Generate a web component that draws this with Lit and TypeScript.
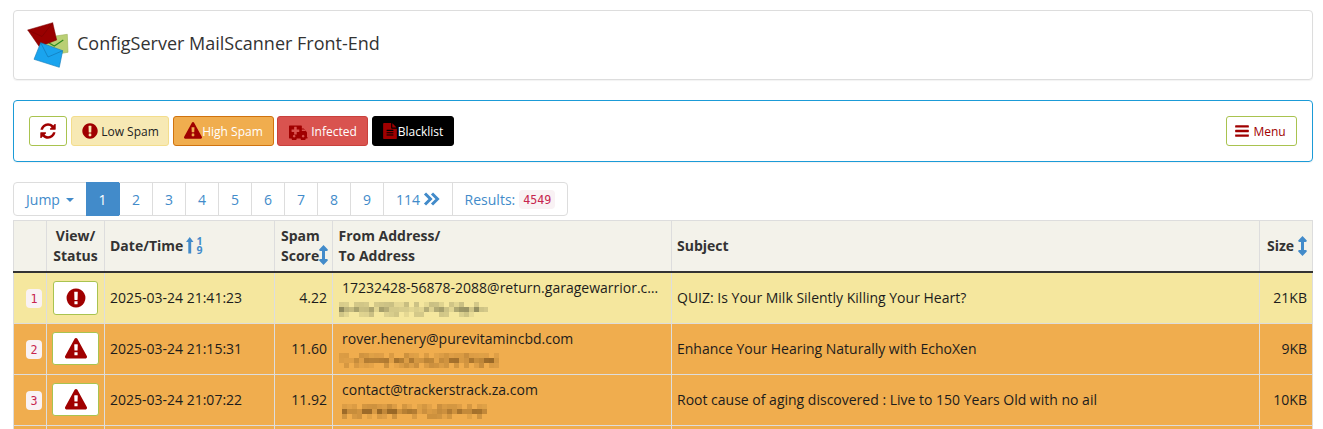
import { LitElement, html, css, svg } from "lit";
import { customElement } from "lit/decorators.js";

const P = {
  circle: "M896 128q209 0 385.5 103t279.5 279.5 103 385.5-103 385.5-279.5 279.5-385.5 103-385.5-103-279.5-279.5-103-385.5 103-385.5 279.5-279.5 385.5-103zm128 1247v-190q0-14-9-23.5t-22-9.5h-192q-13 0-23 10t-10 23v190q0 13 10 23t23 10h192q13 0 22-9.5t9-23.5zm-2-344l18-621q0-12-10-18-10-8-24-8h-220q-14 0-24 8-10 6-10 18l17 621q0 10 10 17.5t24 7.5h185q14 0 23.5-7.5t10.5-17.5z",
  warn: "M1024 1375v-190q0-14-9.5-23.5t-22.5-9.5h-192q-13 0-22.5 9.5t-9.5 23.5v190q0 14 9.5 23.5t22.5 9.5h192q13 0 22.5-9.5t9.5-23.5zm-2-374l18-459q0-12-10-19-13-11-24-11h-220q-11 0-24 11-10 7-10 21l17 457q0 10 10 16.5t24 6.5h185q14 0 23.5-6.5t10.5-16.5zm-14-934l768 1408q35 63-2 126-17 29-46.5 46t-63.5 17h-1536q-34 0-63.5-17t-46.5-46q-37-63-2-126l768-1408q17-31 47-49t65-18 65 18 47 49z",
  refresh: "M1639 1056q0 5-1 7-64 268-268 434.5t-478 166.5q-146 0-282.5-55t-243.5-157l-129 129q-19 19-45 19t-45-19-19-45v-448q0-26 19-45t45-19h448q26 0 45 19t19 45-19 45l-137 137q71 66 161 102t187 36q134 0 250-65t186-179q11-17 53-117 8-23 30-23h192q13 0 22.5 9.5t9.5 22.5zm25-800v448q0 26-19 45t-45 19h-448q-26 0-45-19t-19-45 19-45l138-138q-148-137-349-137-134 0-250 65t-186 179q-11 17-53 117-8 23-30 23h-199q-13 0-22.5-9.5t-9.5-22.5v-7q65-268 270-434.5t480-166.5q146 0 284 55.5t245 156.5l130-129q19-19 45-19t45 19 19 45z",
  bars: "M1664 1344v128q0 26-19 45t-45 19h-1408q-26 0-45-19t-19-45v-128q0-26 19-45t45-19h1408q26 0 45 19t19 45zm0-512v128q0 26-19 45t-45 19h-1408q-26 0-45-19t-19-45v-128q0-26 19-45t45-19h1408q26 0 45 19t19 45zm0-512v128q0 26-19 45t-45 19h-1408q-26 0-45-19t-19-45v-128q0-26 19-45t45-19h1408q26 0 45 19t19 45z",
  amb: "M576 1408q0-53-37.5-90.5t-90.5-37.5-90.5 37.5-37.5 90.5 37.5 90.5 90.5 37.5 90.5-37.5 37.5-90.5zm-384-512h384v-256h-158q-14 2-22 9l-195 195q-7 12-9 22v30zm1280 512q0-53-37.5-90.5t-90.5-37.5-90.5 37.5-37.5 90.5 37.5 90.5 90.5 37.5 90.5-37.5 37.5-90.5zm128-448v-192q0-14-9-23t-23-9h-224v-224q0-14-9-23t-23-9h-192q-14 0-23 9t-9 23v224h-224q-14 0-23 9t-9 23v192q0 14 9 23t23 9h224v224q0 14 9 23t23 9h192q14 0 23-9t9-23v-224h224q14 0 23-9t9-23zm256-544v1152q0 26-19 45t-45 19h-192q0 106-75 181t-181 75-181-75-75-181h-384q0 106-75 181t-181 75-181-75-75-181h-128q-26 0-45-19t-19-45 19-45 45-19v-416q0-26 13-58t32-51l198-198q19-19 51-32t58-13h160v-320q0-26 19-45t45-19h1152q26 0 45 19t19 45z",
  file: "M1596 476q14 14 28 36h-472v-472q22 14 36 28zm-476 164h544v1056q0 40-28 68t-68 28h-1344q-40 0-68-28t-28-68v-1600q0-40 28-68t68-28h800v544q0 40 28 68t68 28zm160 736v-64q0-14-9-23t-23-9h-704q-14 0-23 9t-9 23v64q0 14 9 23t23 9h704q14 0 23-9t9-23zm0-256v-64q0-14-9-23t-23-9h-704q-14 0-23 9t-9 23v64q0 14 9 23t23 9h704q14 0 23-9t9-23zm0-256v-64q0-14-9-23t-23-9h-704q-14 0-23 9t-9 23v64q0 14 9 23t23 9h704q14 0 23-9t9-23z",
};

const icon = (d: string, cls: string, vb = "0 0 1792 1792") =>
  html`<svg class=${cls} viewBox=${vb} fill="currentColor" aria-hidden="true"><path d=${d}></path></svg>`;

const sortV = html`<svg class="sortv" viewBox="0 0 9 20" fill="#428bca" aria-hidden="true">
  <path d="M4.5 0 L8.8 4.6 Q9 6 7.6 6 H6 V14 H7.6 Q9 14 8.8 15.4 L4.5 20 L.2 15.4 Q0 14 1.4 14 H3 V6 H1.4 Q0 6 .2 4.6 Z"></path></svg>`;

const logo = html`<svg class="logo" viewBox="0 0 42 46" aria-hidden="true">
  <polygon points="15,16 40.3,12.3 41,30.3 18,34" fill="#b9cf74" stroke="#9db25c" stroke-width=".6"></polygon>
  <path d="M21.7 20.7 L27.3 24 L36.3 18" fill="none" stroke="#2d8a1e" stroke-width="1.1"></path>
  <polygon points=".7,8 25.7,.7 29.7,18 12.3,24.7" fill="#990000" stroke="#7c0000" stroke-width=".5"></polygon>
  <path d="M.7 8 L15 14.5 L25.7 .7" fill="none" stroke="#700000" stroke-width=".5"></path>
  <polygon points="13.7,20.7 35.7,28.7 32.3,45.3 7,37.3" fill="#1aa4ee" stroke="#0f78b8" stroke-width=".6"></polygon>
  <path d="M13.7 20.7 L21 35 L35.7 28.7" fill="none" stroke="#0f70ad" stroke-width=".6"></path>
</svg>`;

function mosaic(width: number, seed: number, base: number[], offset: number) {
  const cell = 5;
  const height = 15;
  const rects = [];
  let s = seed;
  for (let y = 0; y < height; y += cell) {
    for (let x = 0; x < width; x += cell) {
      s = (s * 16807) % 2147483647;
      const edge = y === 0 || y + cell >= height;
      const a = ((s % 100) / 100) * (edge ? 0.22 : 0.6) + 0.08;
      if (edge && s % 3 === 0) continue;
      rects.push(svg`<rect x=${x} y=${y} width=${cell} height=${cell} fill=${`rgba(${base.join(",")},${a.toFixed(2)})`}></rect>`);
    }
  }
  return html`<svg class="mosaic" style="margin-left:${offset}px" width=${width} height=${height} aria-hidden="true" shape-rendering="crispEdges">${rects}</svg>`;
}

const rows = [
  { n: 1, cls: "low", ic: P.circle, date: "2025-03-24 21:41:23", score: "4.22", from: "17232428-56878-2088@return.garagewarrior.com", w: 149, off: 1, seed: 7, subject: "QUIZ: Is Your Milk Silently Killing Your Heart?", size: "21KB" },
  { n: 2, cls: "high", ic: P.warn, date: "2025-03-24 21:15:31", score: "11.60", from: "rover.henery@purevitamincbd.com", w: 160, off: 1, seed: 91, subject: "Enhance Your Hearing Naturally with EchoXen", size: "9KB" },
  { n: 3, cls: "high", ic: P.warn, date: "2025-03-24 21:07:22", score: "11.92", from: "contact@trackerstrack.za.com", w: 145, off: 4, seed: 233, subject: "Root cause of aging discovered : Live to 150 Years Old with no ail", size: "10KB" },
];

@customElement("app-root")
export class AppRoot extends LitElement {
  static styles = css`
    :host { display: block; height: 100vh; overflow: hidden; background: #fff; font-family: "Open Sans", sans-serif; font-size: 14px; color: #333; box-sizing: border-box; padding: 10px 10px 0 13px; }
    * { box-sizing: border-box; }
    svg { display: block; flex: none; }
    .head { height: 70px; border: 1px solid #ddd; border-radius: 4px; display: flex; align-items: center; padding-left: 13px; gap: 8px; box-shadow: 0 1px 1px rgba(0,0,0,.05); }
    .logo { width: 42px; height: 46px; }
    .head h1 { margin: 0 0 4px; font-size: 18px; font-weight: 400; color: #333; line-height: 20px; }
    .bar { margin-top: 20px; height: 62px; border: 1px solid #1b9bd7; border-radius: 4px; display: flex; align-items: center; padding: 0 15px; gap: 4px; box-shadow: 0 1px 1px rgba(0,0,0,.05); }
    .btn { height: 30px; border: 1px solid; border-radius: 3px; display: flex; align-items: center; justify-content: center; font-size: 12px; line-height: 18px; gap: 2px; }
    .btn span { padding-top: 2px; }
    .btn svg { color: #a00000; }
    .i16 { width: 16px; height: 16px; }
    .i18 { width: 18px; height: 18px; }
    .refresh { width: 38px; background: #fff; border-color: #a9c34f; }
    .lowb { width: 98px; background: #f7e9b4; border-color: #f3dd8c; color: #222; }
    .highb { width: 101px; background: #f0ad4e; border-color: #d0730f; color: #fff; gap: 0; margin-right: -1px; }
    .inf { width: 91px; background: #d9534f; border-color: #c9403c; color: #fff; gap: 3px; }
    .blk { width: 82px; background: #000; border-color: #000; color: #fff; gap: 0; padding-right: 1px; }
    .flip { transform: scaleX(-1); width: 20px; height: 18px; }
    .menu { width: 71px; margin-left: auto; background: #fff; border-color: #a9c34f; color: #a00000; gap: 3px; padding-right: 3px; }
    .pager { margin-top: 20px; display: flex; height: 34px; width: max-content; border: 1px solid #ddd; border-radius: 4px; color: #428bca; }
    .pager > div { display: flex; align-items: center; justify-content: center; border-left: 1px solid #ddd; height: 32px; }
    .pager > div:first-child { border-left: 0; }
    .jump { width: 72px; gap: 6px; }
    .caret { width: 0; height: 0; border-top: 4px solid #428bca; border-left: 4px solid transparent; border-right: 4px solid transparent; margin-top: 1px; }
    .pager > .num { width: 33px; }
    .pager > .cur { width: 33px; height: 34px; margin: -1px 0; background: #428bca; color: #fff; border-left: 0; }
    .pager > .cur + .num { border-left-color: #428bca; }
    .pager > .last { width: 69px; gap: 3px; }
    .chev { width: 17px; height: 14px; }
    .pager > .res { width: 115px; gap: 4px; }
    code { font-family: "DejaVu Sans Mono", monospace; font-size: 11.7px; line-height: 21px; height: 19px; padding: 0 4px; background: #f9f2f4; color: #c7254e; border-radius: 4px; display: inline-block; }
    .res code { margin-top: 1px; }
    table { margin-top: 4px; width: 1299px; table-layout: fixed; border-collapse: collapse; }
    col.c1 { width: 33px; } col.c2 { width: 58px; } col.c3 { width: 170px; } col.c4 { width: 58px; }
    col.c5 { width: 339px; } col.c6 { width: 588px; } col.c7 { width: 53px; }
    th, td { border: 1px solid #ddd; padding: 0 5px; overflow: hidden; }
    th { background: #f3f2ea; height: 51px; text-align: left; font-size: 14px; font-weight: 700; line-height: 20px; border-bottom: 2px solid #333; color: #333; white-space: nowrap; }
    th.center { text-align: center; padding: 0; }
    th.pl6 { padding-left: 6px; }
    th.pl5 { padding-left: 5.5px; }
    .thf { display: flex; align-items: center; gap: 3px; }
    .thf.score { align-items: flex-end; text-align: left; gap: 0; }
    .thf.score .sortv { margin: 0 0 1px -1px; }
    .thf.size { gap: 4px; margin-left: 2px; }
    .sortv { width: 9px; height: 20px; }
    .sortn { width: 18px; height: 17px; overflow: visible; }
    td { height: 51px; color: #1c1c1c; line-height: 20px; }
    .low td { background: #f5e79e; height: 52px; }
    .high td { background: #f0ad4e; }
    .c { text-align: center; padding: 0; }
    .badge { padding-left: 8px; }
    .r { text-align: right; }
    td code { vertical-align: middle; }
    .view { margin: -1px auto 0; width: 47px; height: 33px; background: #fff; border: 1px solid #a9c34f; border-radius: 3px; display: flex; align-items: center; justify-content: center; color: #a00000; }
    .low .view { width: 45px; height: 34px; margin-top: 0; }
    .i22 { width: 22px; height: 22px; }
    .addr { padding-left: 4px; white-space: nowrap; overflow: hidden; text-overflow: ellipsis; line-height: 20px; height: 20px; margin-bottom: 4px; }
    .high .addr { margin-top: -1px; }
  `;

  render() {
    return html`
      <div class="head">${logo}<h1>ConfigServer MailScanner Front-End</h1></div>
      <div class="bar">
        <div class="btn refresh">${icon(P.refresh, "i18")}</div>
        <div class="btn lowb">${icon(P.circle, "i18")}<span>Low Spam</span></div>
        <div class="btn highb">${icon(P.warn, "i18")}<span>High Spam</span></div>
        <div class="btn inf">${icon(P.amb, "flip", "0 0 1920 1792")}<span>Infected</span></div>
        <div class="btn blk">${icon(P.file, "i16")}<span>Blacklist</span></div>
        <div class="btn menu">${icon(P.bars, "i16")}<span>Menu</span></div>
      </div>
      <div class="pager">
        <div class="jump">Jump <span class="caret"></span></div>
        <div class="num cur">1</div>
        ${[2, 3, 4, 5, 6, 7, 8, 9].map((n) => html`<div class="num">${n}</div>`)}
        <div class="last">114<svg class="chev" viewBox="0 0 17 14" fill="none" stroke="#428bca" stroke-width="3"><path d="M2 1.5 L7.5 7 L2 12.5 M9 1.5 L14.5 7 L9 12.5"></path></svg></div>
        <div class="res">Results: <code>4549</code></div>
      </div>
      <table>
        <colgroup><col class="c1" /><col class="c2" /><col class="c3" /><col class="c4" /><col class="c5" /><col class="c6" /><col class="c7" /></colgroup>
        <thead>
          <tr>
            <th></th>
            <th class="center">View/<br />Status</th>
            <th><div class="thf">Date/Time
              <svg class="sortn" viewBox="0 0 18 17" aria-hidden="true">
                <path fill="#428bca" d="M3.75 0 L7.5 5 H5.2 V16.5 H2.3 V5 H0 Z"></path>
                <text x="13.5" y="7.5" text-anchor="middle" font-size="10.5" font-weight="700" fill="#428bca" font-family="Open Sans">1</text>
                <text x="13.5" y="16.5" text-anchor="middle" font-size="10.5" font-weight="700" fill="#428bca" font-family="Open Sans">9</text>
              </svg></div></th>
            <th class="pl6"><div class="thf score"><span>Spam<br />Score</span>${sortV}</div></th>
            <th class="pl5">From Address/<br />To Address</th>
            <th>Subject</th>
            <th><div class="thf size">Size ${sortV}</div></th>
          </tr>
        </thead>
        <tbody>
          ${rows.map((r) => html`
            <tr class=${r.cls}>
              <td class="c badge"><code>${r.n}</code></td>
              <td class="c"><div class="view">${icon(r.ic, "i22")}</div></td>
              <td>${r.date}</td>
              <td class="r">${r.score}</td>
              <td>
                <div class="addr">${r.from}</div>
                ${mosaic(r.w, r.seed, r.cls === "low" ? [90, 90, 60] : [110, 70, 20], r.off)}
              </td>
              <td>${r.subject}</td>
              <td class="r">${r.size}</td>
            </tr>`)}
          <tr class="high"><td></td><td></td><td></td><td></td><td></td><td></td><td></td></tr>
        </tbody>
      </table>
    `;
  }
}
